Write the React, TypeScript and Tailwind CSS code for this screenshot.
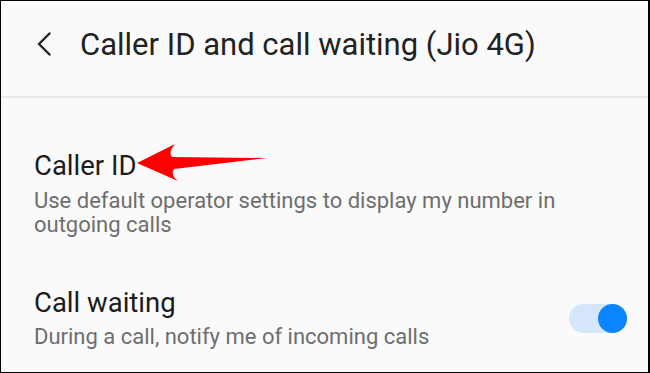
const Toggle = ({ on }: { on: boolean }) => (
  <div className="relative w-[58px] h-[29px] rounded-full bg-[#d5e6fa] shrink-0">
    <div
      className={`absolute top-0 w-[29px] h-[29px] rounded-full bg-[#0a84ff] ${on ? "right-0" : "left-0"}`}
    />
  </div>
);

const App = () => {
  return (
    <div
      className="w-[650px] h-[373px] bg-[#fafafa] border border-r-2 border-black overflow-hidden text-[#1f1f1f]"
      style={{ fontFamily: "Roboto, 'Noto Sans', sans-serif" }}
    >
      <header className="h-[97px] flex items-start border-b-2 border-[#e9e9e9] pl-[35px] pt-[28px]">
        <svg className="mt-[3px]" width="16" height="24" viewBox="0 0 16 24">
          <path
            d="M13.5 1.5 L3 12 L13.5 22.5"
            fill="none"
            stroke="#222"
            strokeWidth="2.4"
            strokeLinecap="round"
            strokeLinejoin="round"
          />
        </svg>
        <h1 className="ml-[28px] text-[31px] leading-[31px] text-[#222]">
          Caller ID and call waiting (Jio 4G)
        </h1>
      </header>

      <div className="pl-[33px] pr-[21px]">
        <div className="relative pt-[52px]">
          <div className="text-[27.5px] leading-[32px] text-[#1c1c1c]">Caller ID</div>
          <p className="mt-[7px] text-[22px] leading-[24px] text-[#6e6e6e] w-[580px]">
            Use default operator settings to display my number in outgoing calls
          </p>
          <svg
            className="absolute left-[102px] top-[45px]"
            width="140"
            height="45"
            viewBox="136 143 140 45"
          >
            <path
              d="M137,163 L175,144 Q168,152 172,157 L267,158 L174,169 Q170,175 178,181 Z"
              fill="#ff0000"
            />
          </svg>
        </div>

        <div className="flex items-center justify-between mt-[50px]">
          <div>
            <div className="text-[27.5px] leading-[32px] text-[#1c1c1c]">Call waiting</div>
            <p className="mt-[6px] text-[22px] leading-[24px] text-[#6e6e6e]">
              During a call, notify me of incoming calls
            </p>
          </div>
          <Toggle on />
        </div>
      </div>
    </div>
  );
};

export default App;
